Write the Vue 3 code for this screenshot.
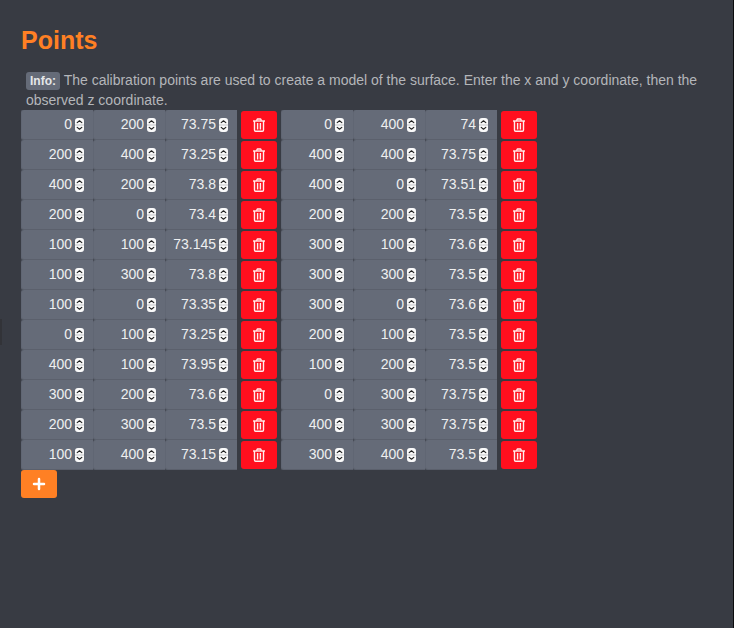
<script setup>
import { ref } from 'vue'

const points = ref([
  [0, 200, 73.75], [0, 400, 74],
  [200, 400, 73.25], [400, 400, 73.75],
  [400, 200, 73.8], [400, 0, 73.51],
  [200, 0, 73.4], [200, 200, 73.5],
  [100, 100, 73.145], [300, 100, 73.6],
  [100, 300, 73.8], [300, 300, 73.5],
  [100, 0, 73.35], [300, 0, 73.6],
  [0, 100, 73.25], [200, 100, 73.5],
  [400, 100, 73.95], [100, 200, 73.5],
  [300, 200, 73.6], [0, 300, 73.75],
  [200, 300, 73.5], [400, 300, 73.75],
  [100, 400, 73.15], [300, 400, 73.5],
])

const axes = ['x', 'y', 'z']

function addPoint() {
  points.value.push([0, 0, 0])
}

function removePoint(index) {
  points.value.splice(index, 1)
}
</script>

<template>
  <main class="panel">
    <span class="handle" aria-hidden="true"></span>
    <h1>Points</h1>
    <p class="hint">
      <span class="badge">Info:</span>
      The calibration points are used to create a model of the surface. Enter the x and y coordinate, then the observed z coordinate.
    </p>
    <div class="points">
      <div v-for="(point, i) in points" :key="i" class="point">
        <div class="fields">
          <label v-for="(axis, a) in axes" :key="axis" class="field">
            <input v-model.number="point[a]" type="number" step="any" :aria-label="`Point ${i + 1} ${axis}`" />
            <svg class="spinner" viewBox="0 0 9 14" aria-hidden="true">
              <rect width="9" height="14" rx="3" fill="#fafafa" />
              <path d="M0 7h9" stroke="#c4c5c9" stroke-width="1" />
              <path d="M2.2 4.6 4.5 2.8l2.3 1.8M2.2 9.4l2.3 1.8 2.3-1.8" fill="none" stroke="#222" stroke-width="1.2" stroke-linecap="round" stroke-linejoin="round" />
            </svg>
          </label>
        </div>
        <button type="button" class="button remove" :aria-label="`Delete point ${i + 1}`" @click="removePoint(i)">
          <svg width="12" height="14" viewBox="0 0 12 14" fill="none" stroke="#ffeeee" stroke-width="1.4" aria-hidden="true">
            <path d="M0 3h12" />
            <path d="M3.5 2.8 4.3 1h3.4l.8 1.8" stroke-linejoin="round" />
            <path d="M1.5 3v9q0 1.2 1.2 1.2h6.6q1.2 0 1.2-1.2V3" />
            <path d="M4.6 5v6.5M7.4 5v6.5" />
          </svg>
        </button>
      </div>
    </div>
    <button type="button" class="button add" aria-label="Add point" @click="addPoint">
      <svg width="14" height="14" viewBox="0 0 14 14" aria-hidden="true">
        <path d="M7 2v10M2 7h10" stroke="#fff" stroke-width="2.5" stroke-linecap="round" />
      </svg>
    </button>
  </main>
</template>

<style>
body {
  background: #383b43;
}
</style>

<style scoped>
.panel {
  position: relative;
  box-sizing: border-box;
  min-height: 100vh;
  padding: 24px 20px 24px 21px;
  border-right: 1px solid #0c0c0e;
  color: #b4b6ba;
  font: 14px/20px "Liberation Sans", Arial, sans-serif;
}

.handle {
  position: absolute;
  left: 0;
  top: 319px;
  width: 2px;
  height: 26px;
  background: #323338;
}

h1 {
  margin: 0 0 14px;
  color: #ff8024;
  font-size: 25px;
  line-height: 32px;
}

.hint {
  margin: 0;
  padding-left: 5px;
}

.badge {
  display: inline-block;
  padding: 0 4px;
  border-radius: 3px;
  background: #656b78;
  color: #e6e7e9;
  font-size: 12px;
  font-weight: bold;
  line-height: 18px;
}

.points {
  display: flex;
  flex-wrap: wrap;
  column-gap: 4px;
  max-width: 520px;
}

.point {
  display: flex;
  align-items: center;
  gap: 4px;
}

.fields {
  display: flex;
  background: #464a53;
}

.field {
  box-sizing: border-box;
  display: flex;
  align-items: center;
  gap: 3px;
  width: 72px;
  height: 30px;
  padding-right: 9px;
  border-bottom: 1px solid #5b606c;
  border-left: 1px solid #606673;
  border-radius: 3px 0 0 3px;
  background: #656b78;
}

.field input {
  flex: 1;
  min-width: 0;
  margin: 0;
  padding: 0 0 2px;
  border: 0;
  outline: 0;
  background: transparent;
  color: #eeeff0;
  font: inherit;
  text-align: right;
  appearance: textfield;
  -moz-appearance: textfield;
}

.field input::-webkit-inner-spin-button,
.field input::-webkit-outer-spin-button {
  margin: 0;
  -webkit-appearance: none;
}

.spinner {
  flex: none;
  width: 9px;
  height: 14px;
}

.button {
  display: flex;
  align-items: center;
  justify-content: center;
  width: 36px;
  height: 28px;
  margin: 0;
  padding: 0;
  border: 0;
  border-radius: 3px;
  cursor: pointer;
}

.remove {
  background: #ff0f1e;
}

.add {
  background: #ff8024;
}
</style>
